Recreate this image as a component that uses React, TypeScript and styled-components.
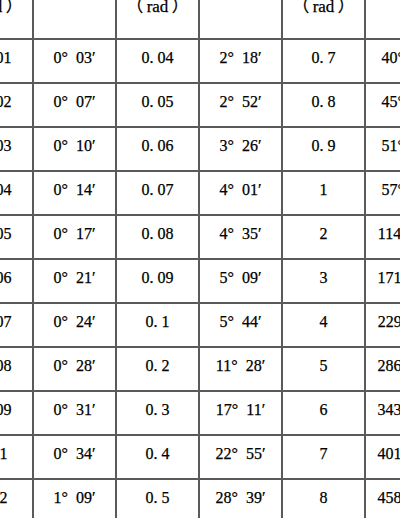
import React from 'react';
import styled, { createGlobalStyle } from 'styled-components';

const GlobalStyle = createGlobalStyle`
  html, body {
    margin: 0;
    padding: 0;
    background: #ffffff;
    overflow: hidden;
  }
`;

const Page = styled.div`
  width: 400px;
  height: 518px;
  overflow: hidden;
  background: #ffffff;
`;

/* grid lines come from the gap showing the dark background */
const Grid = styled.div`
  display: grid;
  grid-template-columns: repeat(6, 81px);
  grid-template-rows: 38px;
  grid-auto-rows: 42px;
  column-gap: 2px;
  row-gap: 2px;
  width: max-content;
  margin-left: -49px;
  background: #5a5a5a;
  font-family: 'Liberation Serif', 'Noto Sans CJK SC', serif;
  font-size: 16px;
  color: #000000;
  -webkit-text-stroke: 0.25px #000000;
`;

const Cell = styled.div<{ $header?: boolean }>`
  background: #ffffff;
  display: flex;
  justify-content: center;
  align-items: ${(p) => (p.$header ? 'flex-start' : 'center')};
  padding-bottom: ${(p) => (p.$header ? '0' : '7px')};
  line-height: ${(p) => (p.$header ? '13px' : '18px')};
  font-size: ${(p) => (p.$header ? '17px' : '16px')};
  white-space: nowrap;
  overflow: hidden;
`;

const rad = (v: string) => `0. ${v}`;
const deg = (d: number, m: string) => `${d}°\u2002${m}′`;

const columns: string[][] = [
  ['001', '002', '003', '004', '005', '006', '007', '008', '009', '01', '02'].map(rad),
  [
    deg(0, '03'), deg(0, '07'), deg(0, '10'), deg(0, '14'), deg(0, '17'), deg(0, '21'),
    deg(0, '24'), deg(0, '28'), deg(0, '31'), deg(0, '34'), deg(1, '09'),
  ],
  ['04', '05', '06', '07', '08', '09', '1', '2', '3', '4', '5'].map(rad),
  [
    deg(2, '18'), deg(2, '52'), deg(3, '26'), deg(4, '01'), deg(4, '35'), deg(5, '09'),
    deg(5, '44'), deg(11, '28'), deg(17, '11'), deg(22, '55'), deg(28, '39'),
  ],
  ['0. 7', '0. 8', '0. 9', '1', '2', '3', '4', '5', '6', '7', '8'],
  [
    deg(40, '06'), deg(45, '50'), deg(51, '34'), deg(57, '18'), deg(114, '35'), deg(171, '53'),
    deg(229, '11'), deg(286, '29'), deg(343, '46'), deg(401, '04'), deg(458, '22'),
  ],
];

const unit = '（\u2009rad\u2009）';
const headers = [unit, '', unit, '', unit, ''];

function App() {
  const rows = columns[0].map((_, r) => columns.map((col) => col[r]));
  return (
    <Page>
      <GlobalStyle />
      <Grid>
        {headers.map((h, i) => (
          <Cell $header key={`h${i}`}>{h}</Cell>
        ))}
        {rows.map((row, r) =>
          row.map((text, c) => <Cell key={`${r}-${c}`}>{text}</Cell>)
        )}
      </Grid>
    </Page>
  );
}

export default App;
